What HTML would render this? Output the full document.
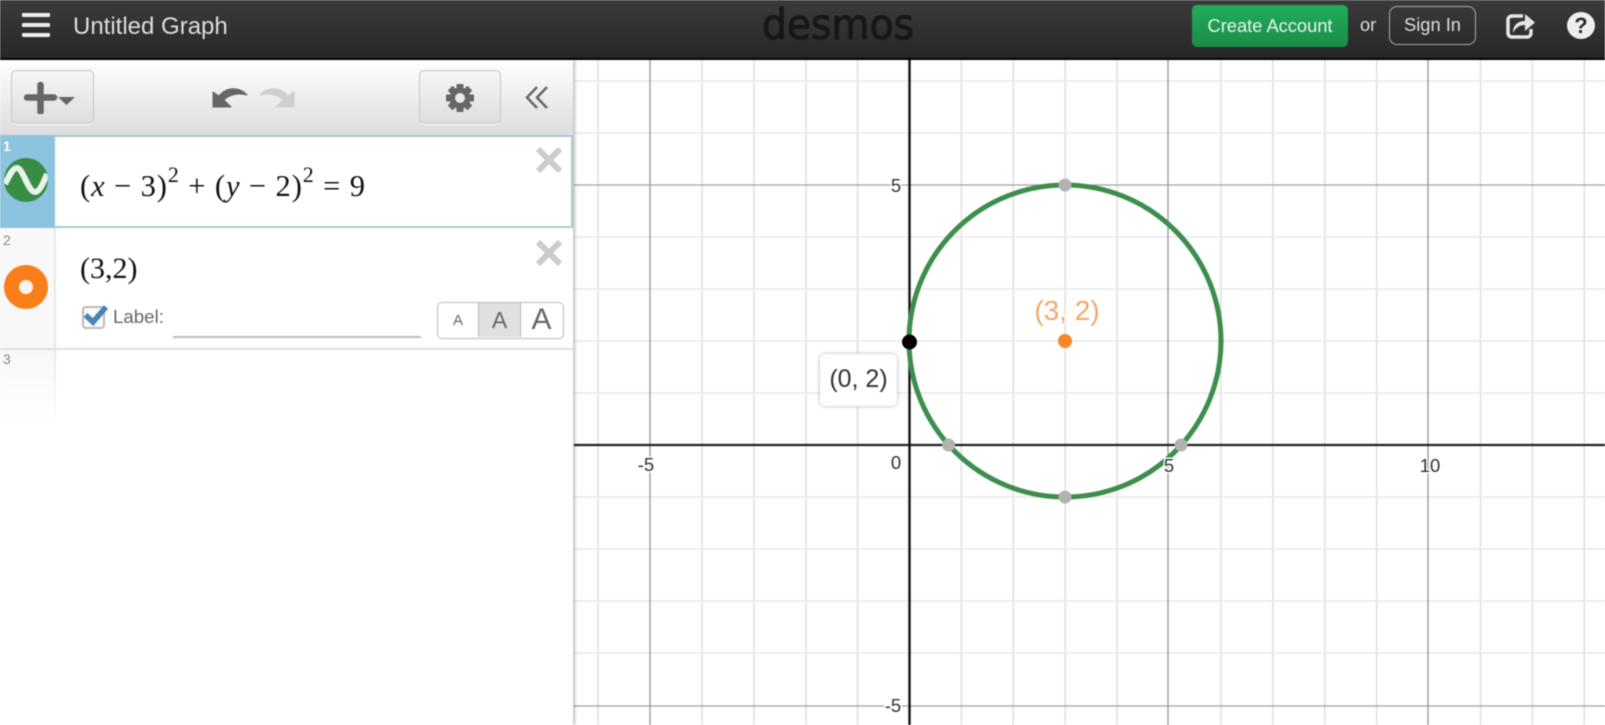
<!DOCTYPE html>
<html><head><meta charset="utf-8"><style>
html,body{margin:0;padding:0;width:1605px;height:725px;overflow:hidden;background:#fff;font-family:"Liberation Sans",sans-serif}
.a{position:absolute}
#page{position:relative;width:1605px;height:725px;overflow:hidden;filter:blur(.4px)}
.btn{box-sizing:border-box;border:1.5px solid #c4c4c4;border-radius:5px;background:linear-gradient(#f6f6f6,#dedede);box-shadow:0 1px 0 #fff}
.m{font-family:"Liberation Serif",serif;color:#111;white-space:nowrap}
.m i{font-style:italic}
sup{font-size:.72em;line-height:0;position:relative;top:-.14em;vertical-align:super}
.n{font-size:14px;color:#888;left:3px}
</style></head><body><div id="page">
<svg class="a" style="left:0;top:0" width="1605" height="725" viewBox="0 0 1605 725">
<g stroke="#dfdfdf" stroke-width="1.500" fill="none">
<path d="M598 60V725M702 60V725M754 60V725M806 60V725M857.600 60V725M961.400 60V725M1013.300 60V725M1065.200 60V725M1117.100 60V725M1221 60V725M1272.900 60V725M1324.800 60V725M1376.700 60V725M1480.500 60V725M1532.400 60V725M1584.300 60V725"/>
</g>
<g stroke="#e8e8e8" stroke-width="1.600" fill="none">
<path d="M574 81H1605M574 133H1605M574 237H1605M574 289H1605M574 341H1605M574 393H1605M574 497H1605M574 549H1605M574 601H1605M574 653H1605"/>
</g>
<g stroke="#8e8e8e" stroke-width="1.200" fill="none"><path d="M650 60V725M1168 60V725M1428 60V725"/></g>
<g stroke="#a0a0a0" stroke-width="1.300" fill="none"><path d="M574 185H1605M574 706H1605"/></g>
<path d="M574 445H1605" stroke="#222" stroke-width="2.300"/>
<path d="M909.500 60V725" stroke="#111" stroke-width="2.400"/>
<circle cx="1065" cy="341" r="156" fill="none" stroke="#3d8e4c" stroke-width="5"/>
<g fill="#b2b2b2"><circle cx="1065" cy="185" r="6.500"/><circle cx="1065" cy="497" r="6.500"/><circle cx="948.500" cy="445" r="6.500"/><circle cx="1181" cy="445" r="6.500"/></g>
<circle cx="1065" cy="341" r="7" fill="#f98727"/>
<circle cx="909.500" cy="342" r="7.500" fill="#000"/>
<g font-family="Liberation Sans" font-size="18.500" fill="#333" text-anchor="middle" stroke="#fff" stroke-width="3" paint-order="stroke">
<text x="646" y="471">-5</text><text x="896" y="469">0</text><text x="1169" y="472">5</text><text x="1430" y="472">10</text><text x="896" y="192">5</text><text x="893" y="712">-5</text>
</g>
<text x="1067" y="320" font-family="Liberation Sans" font-size="28" fill="#efaa6c" text-anchor="middle" stroke="#fff" stroke-width="3" paint-order="stroke">(3, 2)</text>
</svg>
<div class="a" style="left:820px;top:354px;width:77px;height:52px;background:#fff;border-radius:6px;box-shadow:0 0 4px rgba(0,0,0,.3);color:#333;font-size:25px;line-height:51px;text-align:center">(0, 2)</div>

<!-- header -->
<div class="a" style="left:0;top:0;width:1605px;height:58px;background:linear-gradient(#3b3b3b,#272727)"></div>
<div class="a" style="left:0;top:58px;width:1605px;height:2px;background:#000"></div>
<div class="a" style="left:22px;top:13px;width:28px;height:4px;background:#eee;border-radius:1px"></div>
<div class="a" style="left:22px;top:23px;width:28px;height:4px;background:#eee;border-radius:1px"></div>
<div class="a" style="left:22px;top:33px;width:28px;height:4px;background:#eee;border-radius:1px"></div>
<div class="a" style="left:73px;top:12px;color:#ddd;font-size:24px;line-height:29px;white-space:nowrap">Untitled Graph</div>
<svg class="a" style="left:750px;top:0" width="180" height="58"><text x="12" y="39" font-family="DejaVu Sans" font-size="42" fill="#171717" stroke="#171717" stroke-width="1" textLength="152" lengthAdjust="spacingAndGlyphs">desmos</text></svg>
<div class="a" style="left:1192px;top:5px;width:156px;height:42px;border-radius:5px;background:linear-gradient(#1fae5a,#1b8d49);color:#e8f5ec;font-size:18.300px;line-height:41px;text-align:center">Create Account</div>
<div class="a" style="left:1360px;top:14px;color:#ddd;font-size:18.300px;line-height:22px">or</div>
<div class="a" style="box-sizing:border-box;left:1389px;top:6px;width:87px;height:39px;border:1.500px solid #aaa;border-radius:8px;color:#ddd;font-size:18.300px;line-height:36px;text-align:center">Sign In</div>
<svg class="a" style="left:1505px;top:10px" width="32" height="30"><path d="M18 6H7a4 4 0 0 0-4 4v13a4 4 0 0 0 4 4h15a4 4 0 0 0 4-4v-4" fill="none" stroke="#e6e6e6" stroke-width="3.500"/><path d="M8 23c0-8 5-12 12-12V4l10 8.500-10 8.500v-6c-5 0-9 2-12 8z" fill="#e6e6e6"/></svg>
<div class="a" style="left:1567px;top:12px;width:28px;height:27px;border-radius:50%;background:#eee;color:#2b2b2b;font-weight:bold;font-size:22px;line-height:28px;text-align:center">?</div>

<!-- panel -->
<div class="a" style="left:0;top:60px;width:573px;height:665px;background:#fff;box-shadow:2px 0 3px rgba(0,0,0,.25)"></div>
<div class="a" style="left:0;top:60px;width:573px;height:75px;background:linear-gradient(#fff,#dcdcdc)"></div>
<div class="a btn" style="left:11px;top:70px;width:83px;height:54px"></div>
<svg class="a" style="left:24px;top:82px" width="56" height="32"><path d="M3 15.500H30M16.500 3V30" stroke="#666" stroke-width="6.500" stroke-linecap="round"/><path d="M34 15H51L42.500 23z" fill="#666"/></svg>
<svg class="a" style="left:210px;top:84px" width="90" height="26"><path d="M3 8V23H21L14 16C20 10 29 9 37 11 30 3 17 2 9 12z" fill="#666" stroke="#666" stroke-linejoin="round"/><path d="M84 8V23H66L73 16C67 10 58 9 50 11 57 3 70 2 78 12z" fill="#cfcfcf" stroke="#cfcfcf" stroke-linejoin="round"/></svg>
<div class="a btn" style="left:419px;top:70px;width:82px;height:54px"></div>
<svg class="a" style="left:445px;top:83px" width="30" height="30" viewBox="-15 -15 30 30"><g fill="#666"><circle r="10.500"/><g><rect x="-3.500" y="-14" width="7" height="28" rx="1"/><rect x="-3.500" y="-14" width="7" height="28" rx="1" transform="rotate(45)"/><rect x="-3.500" y="-14" width="7" height="28" rx="1" transform="rotate(90)"/><rect x="-3.500" y="-14" width="7" height="28" rx="1" transform="rotate(135)"/></g></g><circle r="5" fill="#e9e9e9"/></svg>
<svg class="a" style="left:523px;top:84px" width="28" height="28"><path d="M14 3L4 13.500 14 24M24 3L14 13.500 24 24" fill="none" stroke="#666" stroke-width="2.500"/></svg>

<!-- expr 1 -->
<div class="a" style="box-sizing:border-box;left:0;top:135px;width:573px;height:93px;border:2px solid #a8cbd6;border-left:0;background:#fff"></div>
<div class="a" style="left:0;top:135px;width:55px;height:93px;background:#8cc3de"></div>
<div class="a" style="left:3px;top:138px;color:#fff;font-size:14px;font-weight:bold;line-height:16px">1</div>
<svg class="a" style="left:4px;top:158px" width="44" height="44"><defs><clipPath id="c"><circle cx="22" cy="22" r="22"/></clipPath></defs><circle cx="22" cy="22" r="22" fill="#388c46"/><path clip-path="url(#c)" d="M1 26C6 16 9 10 13 10 19 10 24 34 31 34 35 34 39 26 43 16" fill="none" stroke="#e8f3ea" stroke-width="6"/></svg>
<div class="a m" style="left:80px;top:167px;font-size:30.500px;line-height:38px;letter-spacing:.9px">(<i>x</i> − 3)<sup>2</sup> + (<i>y</i> − 2)<sup>2</sup> = 9</div>
<svg class="a" style="left:533px;top:144px" width="32" height="32"><path d="M5 5L27 27M27 5L5 27" stroke="#ccc" stroke-width="6"/></svg>

<!-- expr 2 -->
<div class="a" style="left:0;top:228px;width:54px;height:120px;background:#f8f8f8;border-right:2px solid #e8e8e8"></div>
<div class="a n" style="top:232px">2</div>
<svg class="a" style="left:4px;top:265px" width="44" height="44"><circle cx="22" cy="22" r="22" fill="#fa7e19"/><circle cx="22" cy="22" r="7" fill="#fdf3ea"/></svg>
<div class="a m" style="left:80px;top:251px;font-size:30px;line-height:36px">(3,2)</div>
<div class="a" style="box-sizing:border-box;left:82px;top:306px;width:23px;height:23px;border:2px solid #bbb;border-radius:4px;background:#fafafa"></div>
<svg class="a" style="left:82px;top:302px" width="28" height="26"><path d="M3.500 13L11 20 24 5" fill="none" stroke="#4a83b4" stroke-width="5.500"/></svg>
<div class="a" style="left:113px;top:307px;color:#666;font-size:18.700px;line-height:20px">Label:</div>
<div class="a" style="left:173px;top:336px;width:248px;height:1.500px;background:#bbb"></div>
<div class="a" style="box-sizing:border-box;left:437px;top:302px;width:127px;height:37px;border:1.500px solid #bbb;border-radius:5px;background:#fff;overflow:hidden;color:#666;text-align:center">
<div class="a" style="left:0;top:0;width:40px;height:34px;font-size:15px;line-height:35px">A</div>
<div class="a" style="left:40px;top:0;width:42px;height:34px;box-sizing:border-box;border-left:1.500px solid #bbb;background:#e0e0e0;font-size:23px;line-height:35px">A</div>
<div class="a" style="left:82px;top:0;width:42px;height:34px;box-sizing:border-box;border-left:1.500px solid #bbb;font-size:30px;line-height:34px;">A</div>
</div>
<svg class="a" style="left:533px;top:237px" width="32" height="32"><path d="M5 5L27 27M27 5L5 27" stroke="#ccc" stroke-width="6"/></svg>
<div class="a" style="left:0;top:348px;width:573px;height:2px;background:#e0e0e0"></div>

<!-- expr 3 -->
<div class="a" style="left:0;top:350px;width:54px;height:72px;background:linear-gradient(#f8f8f8,#fff);border-right:2px solid;border-image:linear-gradient(#e8e8e8,#fff) 1"></div>
<div class="a n" style="top:351px">3</div>
</div></body></html>
